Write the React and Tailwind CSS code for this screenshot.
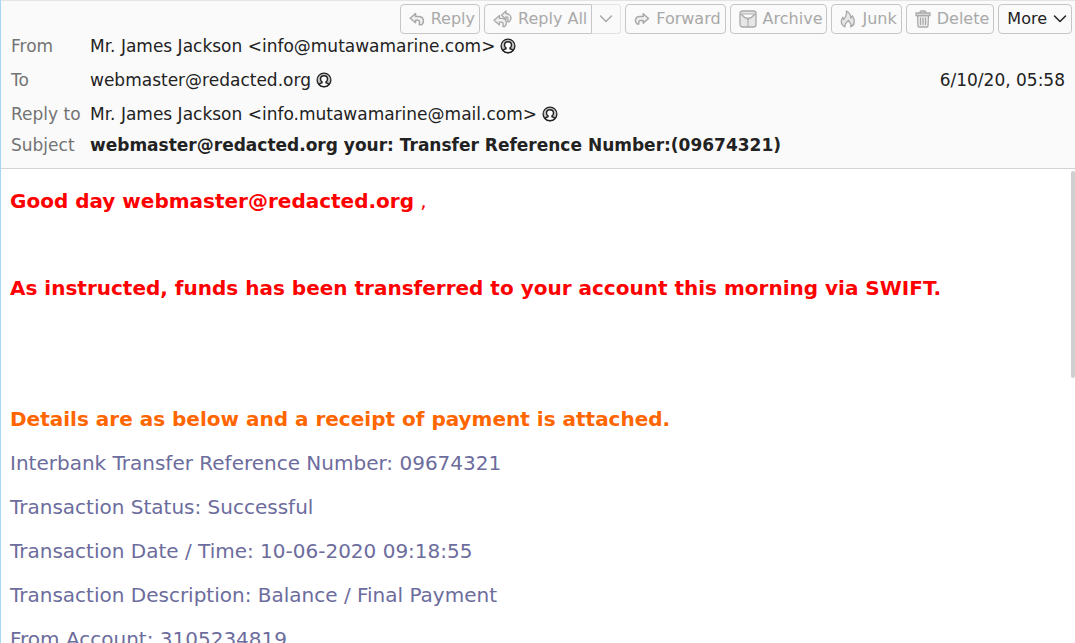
import React from "react";

const ReplyIcon = () => (
  <svg width="16" height="16" viewBox="0 0 16 16" fill="#f0f0f0" stroke="currentColor" strokeWidth="1.5" strokeLinejoin="round" aria-hidden="true">
    <path d="M6.500 2.500 1.200 7.200l5.300 4.600V9.200h2.300c1.400 0 1.900.8 1.700 2.500l-.2 2h2.500c1.400-1.200 1.900-2.900 1.600-4.600-.5-2.200-2-3.400-4.600-3.500l-3.300-.1Z" />
  </svg>
);

const ReplyAllIcon = () => (
  <svg width="19" height="18" viewBox="0 0 19 18" fill="#f0f0f0" stroke="currentColor" strokeWidth="1.300" strokeLinejoin="round" aria-hidden="true">
    <path d="M13 1 8.500 5.200l4.500 4V6.800c1.600.1 2.200.9 2 2.600l-.3 2.400h1.500c1.500-1.300 2.100-2.800 1.700-4.600-.5-2.200-2-3.500-4.900-3.700Z" />
    <path d="M6.500 5.400 1 10.200l5.500 4.700v-2.700h1.800c1.500 0 2 .7 1.800 2.300l-.2 2h1.800c1.400-1.300 1.900-2.800 1.600-4.500-.5-2.200-2-3.500-4.500-3.600H6.500Z" />
  </svg>
);

const ForwardIcon = () => (
  <svg width="16" height="16" viewBox="0 0 16 16" fill="#f0f0f0" stroke="currentColor" strokeWidth="1.500" strokeLinejoin="round" aria-hidden="true">
    <path d="m9.200 2.800 5.300 4.700-5.300 4.600V9.500H6.500c-1.500 0-2 .9-1.700 3.500H3C1.700 11.800 1.200 10.500 1.400 9c.4-2.200 1.800-3.400 4.600-3.500h3.200Z" />
  </svg>
);

const ArchiveIcon = () => (
  <svg width="18" height="18" viewBox="0 0 18 18" fill="none" stroke="currentColor" strokeWidth="1.300" strokeLinejoin="round" aria-hidden="true">
    <rect x="1" y="1" width="16" height="16" rx="2.500" fill="#e6e6e6" />
    <path d="M1.500 4.200h15" />
    <path d="M2.500 4.500 6 7.800h2L9 9l1-1.200h2l3.500-3.300" fill="#fafafa" />
    <path d="M9 9v8" strokeWidth="2.200" strokeDasharray="1.200 1" />
  </svg>
);

const JunkIcon = () => (
  <svg width="16" height="18" viewBox="0 0 16 18" fill="#e6e6e6" stroke="currentColor" strokeWidth="1.300" strokeLinejoin="round" aria-hidden="true">
    <path d="M5 16.800C.4 14.800.6 10.500 2.800 7.300l1 2.200C5.600 7 7.300 4.500 6.300 1c3.400 1.500 4.500 4.300 4.500 7.200l1.600-2.400c2.700 4.200 3 9-1.700 11 .7-2 .2-3.400-1.300-4.700-.4-.5-.7-1-.8-1.700-2.300 1.700-4.300 3.700-3.600 6.400Z" />
  </svg>
);

const DeleteIcon = () => (
  <svg width="16" height="18" viewBox="0 0 16 18" fill="none" stroke="currentColor" strokeWidth="1.300" strokeLinejoin="round" strokeLinecap="round" aria-hidden="true">
    <path d="M2.500 5.500 3 16c0 .6.400 1 1 1h8c.6 0 1-.4 1-1l.5-10.500Z" fill="#f0f0f0" />
    <path d="M1 3h14v2.500H1ZM5 3c0-1.200.3-2 1.200-2h3.600C10.700 1 11 1.800 11 3" fill="#e4e4e4" />
    <path d="M5.500 8v6.500M8 8v6.500M10.500 8v6.500" />
  </svg>
);

const Chevron = () => (
  <svg width="14" height="10" viewBox="0 0 14 10" fill="none" stroke="currentColor" strokeWidth="1.500" strokeLinecap="round" strokeLinejoin="round" aria-hidden="true">
    <path d="m1.500 2 5.500 5.500L12.500 2" />
  </svg>
);

const ContactIcon = () => (
  <svg width="16" height="16" viewBox="0 0 16 16" fill="none" stroke="currentColor" aria-hidden="true">
    <circle cx="8" cy="8" r="6.900" strokeWidth="1.300" fill="#c4c4c4" />
    <path d="M3 12.300c.8-1 1.800-1.400 3-1.600V9.900C5 9.200 4.500 8.200 4.500 6.900 4.500 4.800 5.900 3.700 8 3.700s3.500 1.100 3.500 3.200c0 1.300-.5 2.300-1.500 3v.8c1.200.2 2.200.6 3 1.600-1.200 1.600-2.900 2.300-5 2.300s-3.800-.7-5-2.300Z" strokeWidth="1.400" fill="#fff" />
  </svg>
);

const buttonClass = "flex h-[30px] items-center gap-[6px] rounded-[4px] border border-[#c6c6c6] pl-2 pr-1";

function Address({ children }) {
  return (
    <span className="flex items-center gap-[5px] whitespace-nowrap">
      {children}
      <button type="button" aria-label="Contact" className="text-[#222]"><ContactIcon /></button>
    </span>
  );
}

function Toolbar() {
  return (
    <div role="toolbar" aria-label="Message actions" className="flex h-[33px] items-end justify-end gap-1 pr-[3px] text-base text-[#a9a9a9]">
      <button type="button" className={buttonClass}><ReplyIcon />Reply</button>
      <div className="flex">
        <button type="button" className={`${buttonClass} rounded-r-none`}><ReplyAllIcon />Reply All</button>
        <button type="button" aria-label="More reply options" className="flex h-[30px] w-[29px] items-center justify-center rounded-r-[4px] border border-l-0 border-[#e2e2e2]"><Chevron /></button>
      </div>
      <button type="button" className={buttonClass}><ForwardIcon />Forward</button>
      <button type="button" className={buttonClass}><ArchiveIcon />Archive</button>
      <button type="button" className={buttonClass}><JunkIcon />Junk</button>
      <button type="button" className={buttonClass}><DeleteIcon />Delete</button>
      <button type="button" className={`${buttonClass} text-[#222]`}>More<Chevron /></button>
    </div>
  );
}

export default function App() {
  return (
    <div className="flex h-screen flex-col overflow-hidden border-l border-[#a5d8f5] bg-white font-['DejaVu_Sans',sans-serif]">
      <header className="shrink-0 border-b border-[#d3d3d3] border-t border-t-[#e4e4e4] bg-[#fafafa] pb-[11px] text-[17px] text-[#222]">
        <Toolbar />
        <dl className="grid grid-cols-[79px_1fr] px-[10px] leading-6 [&>dt]:text-[#737373]">
          <dt>From</dt>
          <dd><Address>Mr. James Jackson &lt;info@mutawamarine.com&gt;</Address></dd>
          <dt className="mt-[10px]">To</dt>
          <dd className="mt-[10px] flex justify-between">
            <Address>webmaster@redacted.org</Address>
            <time>6/10/20, 05:58</time>
          </dd>
          <dt className="mt-[10px]">Reply to</dt>
          <dd className="mt-[10px]"><Address>Mr. James Jackson &lt;info.mutawamarine@mail.com&gt;</Address></dd>
          <dt className="mt-[7px]">Subject</dt>
          <dd className="mt-[7px] font-bold">webmaster@redacted.org your: Transfer Reference Number:(09674321)</dd>
        </dl>
      </header>
      <main className="flex min-h-0 flex-1">
        <article className="flex flex-1 flex-col gap-5 overflow-hidden pl-[9px] pt-5 text-[20px] leading-6 text-[#6c6c9d] [&>p]:shrink-0">
          <p className="text-[#ff0000]"><strong>Good day webmaster@redacted.org</strong> ,</p>
          <p className="mt-[43px] font-bold text-[#ff0000]">As instructed, funds has been transferred to your account this morning via SWIFT.</p>
          <p className="mt-[87px] font-bold text-[#ff6600]">Details are as below and a receipt of payment is attached.</p>
          <p>Interbank Transfer Reference Number: 09674321</p>
          <p>Transaction Status: Successful</p>
          <p>Transaction Date / Time: 10-06-2020 09:18:55</p>
          <p>Transaction Description: Balance / Final Payment</p>
          <p>From Account: 3105234819</p>
        </article>
        <div className="mt-[2px] h-[207px] w-1 shrink-0 rounded-full bg-[#cfcfcf]" />
      </main>
    </div>
  );
}
